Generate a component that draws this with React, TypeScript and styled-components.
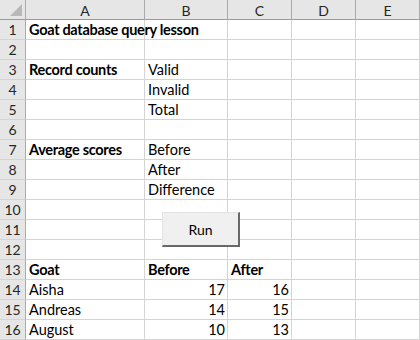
import React from 'react';
import styled, { createGlobalStyle } from 'styled-components';

const GlobalStyle = createGlobalStyle`
	html, body {
		margin: 0;
		padding: 0;
		background: #ffffff;
	}
	body {
		font-family: Lato, 'Liberation Sans', sans-serif;
	}
`;

const columns = ['A', 'B', 'C', 'D', 'E'];

interface CellVal {
	text?: string;
	bold?: boolean;
	num?: boolean;
}

// one entry per row, cells for A..E
const rows: CellVal[][] = [
	[{ text: 'Goat database query lesson', bold: true }],
	[],
	[{ text: 'Record counts', bold: true }, { text: 'Valid' }],
	[{}, { text: 'Invalid' }],
	[{}, { text: 'Total' }],
	[],
	[{ text: 'Average scores', bold: true }, { text: 'Before' }],
	[{}, { text: 'After' }],
	[{}, { text: 'Difference' }],
	[],
	[],
	[],
	[
		{ text: 'Goat', bold: true },
		{ text: 'Before', bold: true },
		{ text: 'After', bold: true },
	],
	[{ text: 'Aisha' }, { text: '17', num: true }, { text: '16', num: true }],
	[{ text: 'Andreas' }, { text: '14', num: true }, { text: '15', num: true }],
	[{ text: 'August' }, { text: '10', num: true }, { text: '13', num: true }],
];

const App = () => {
	return (
		<>
			<GlobalStyle />
			<Sheet>
				<Grid>
					<Corner>
						<CornerMark />
					</Corner>
					{columns.map((c) => (
						<ColHead key={c}>{c}</ColHead>
					))}
					{rows.map((row, r) => (
						<React.Fragment key={r}>
							<RowHead>{r + 1}</RowHead>
							{columns.map((c, i) => {
								const cell = row[i] || {};
								// long text spills into the next empty cell
								const spill =
									!!cell.text && !cell.num && !(row[i + 1] && row[i + 1].text);
								return (
									<Cell
										key={c}
										$bold={!!cell.bold}
										$num={!!cell.num}
										$spill={spill}>
										{cell.text}
									</Cell>
								);
							})}
						</React.Fragment>
					))}
				</Grid>
				<RunButton type="button">Run</RunButton>
			</Sheet>
		</>
	);
};

const Sheet = styled.div`
	position: relative;
	width: 420px;
	height: 340px;
	overflow: hidden;
`;

const Grid = styled.div`
	display: grid;
	grid-template-columns: 26px 119px 83px 64px 64px 64px;
	grid-template-rows: repeat(17, 20px);
	font-size: 14.5px;
	color: #000;
`;

const Corner = styled.div`
	position: relative;
	background: #e6e6e6;
	border-right: 1px solid #ababab;
	border-bottom: 1px solid #9b9b9b;
	box-sizing: border-box;
`;

const CornerMark = styled.div`
	position: absolute;
	right: 3px;
	bottom: 3px;
	width: 0;
	height: 0;
	border-left: 12px solid transparent;
	border-bottom: 12px solid #b8b8b8;
`;

const ColHead = styled.div`
	display: flex;
	align-items: center;
	justify-content: center;
	background: #e6e6e6;
	border-right: 1px solid #ababab;
	border-bottom: 1px solid #9b9b9b;
	box-sizing: border-box;
	color: #262626;
	font-size: 14px;
	padding-top: 1px;
`;

const RowHead = styled.div`
	display: flex;
	align-items: flex-end;
	justify-content: center;
	background: #e6e6e6;
	border-right: 1px solid #ababab;
	border-bottom: 1px solid #d4d4d4;
	box-sizing: border-box;
	color: #262626;
	font-size: 14px;
	line-height: 18px;
`;

const Cell = styled.div<{ $bold: boolean; $num: boolean; $spill: boolean }>`
	position: relative;
	z-index: ${({ $spill }) => ($spill ? 1 : 0)};
	box-sizing: border-box;
	border-right: 1px solid #d4d4d4;
	border-bottom: 1px solid #d4d4d4;
	padding: 0 2px 0 3px;
	line-height: 19px;
	white-space: nowrap;
	overflow: ${({ $spill }) => ($spill ? 'visible' : 'hidden')};
	font-weight: ${({ $bold }) => ($bold ? 700 : 400)};
	letter-spacing: ${({ $bold }) => ($bold ? '-0.3px' : '0')};
	text-align: ${({ $num }) => ($num ? 'right' : 'left')};
`;

const RunButton = styled.button`
	position: absolute;
	left: 162px;
	top: 212px;
	width: 78px;
	height: 35px;
	margin: 0;
	padding: 0;
	background: #f0f0f0;
	border: 1px solid #e3e3e3;
	border-right: 2px solid #696969;
	border-bottom: 2px solid #696969;
	box-sizing: border-box;
	font-family: Lato, 'Liberation Sans', sans-serif;
	font-size: 14px;
	color: #000;
	cursor: pointer;
`;

export default App;
